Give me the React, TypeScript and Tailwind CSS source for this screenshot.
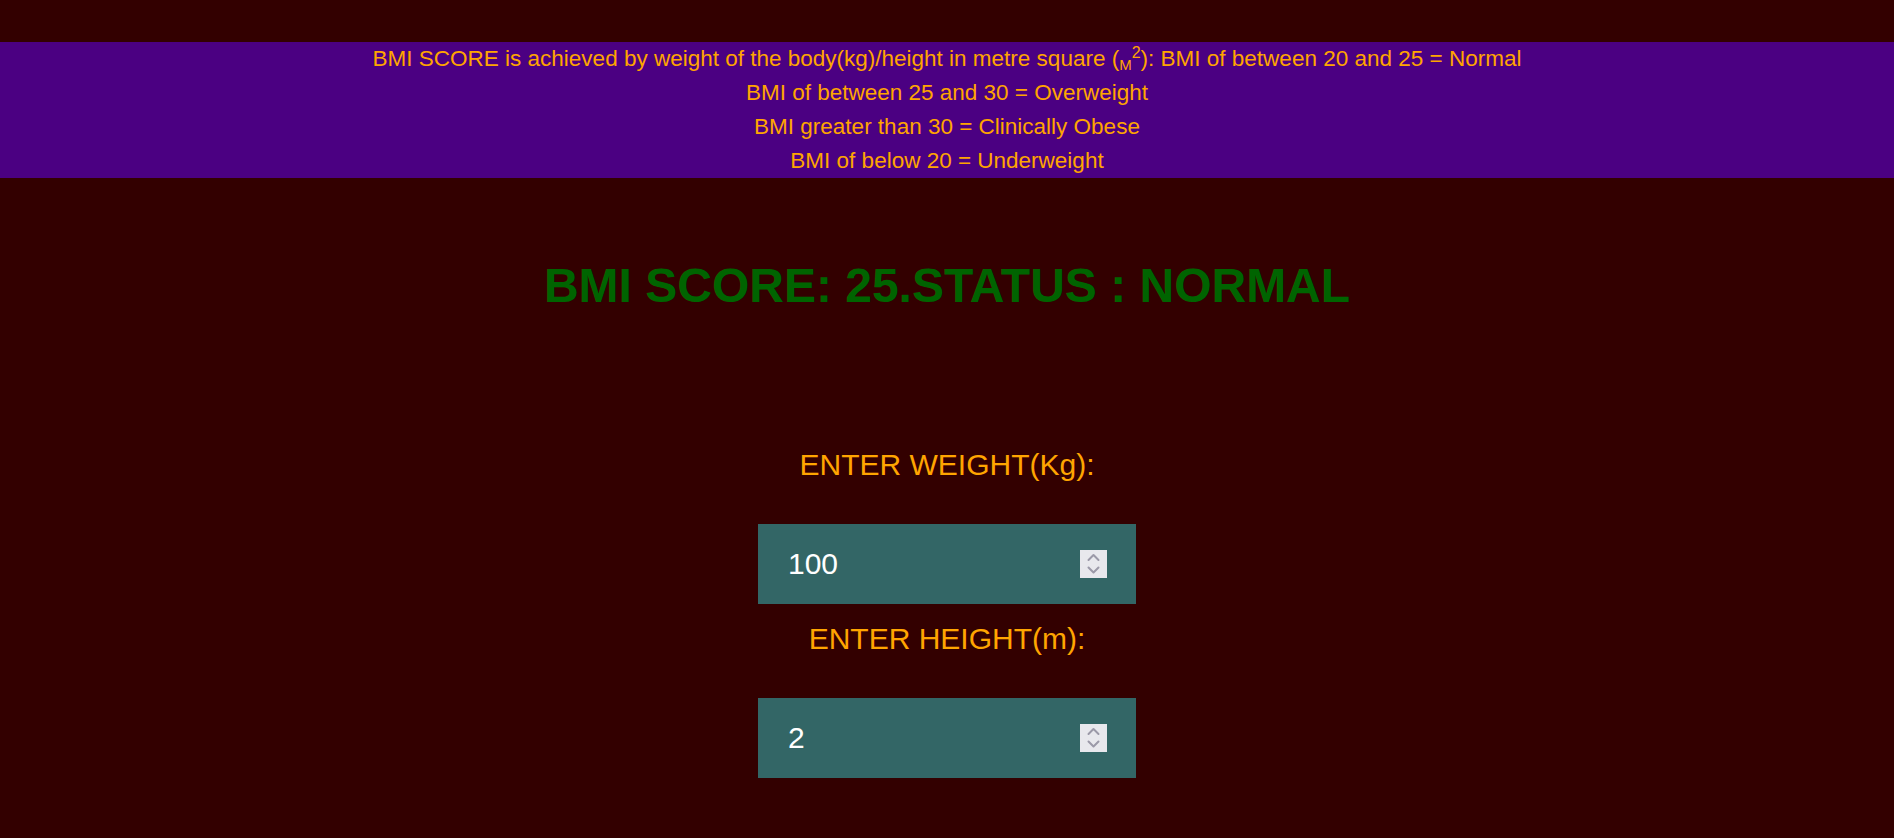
import React from "react";

function Spinner() {
  return (
    <div className="pointer-events-none absolute right-[29px] top-1/2 h-[28px] w-[27px] -translate-y-1/2 bg-[#e8e8ed]">
      <svg width="27" height="28" viewBox="0 0 27 28" fill="none" stroke="#9b99a8" strokeWidth="2" strokeLinecap="round" strokeLinejoin="round">
        <polyline points="8.5,10 13.5,5 18.5,10" />
        <polyline points="8.5,17.5 13.5,22.5 18.5,17.5" />
      </svg>
    </div>
  );
}

function NumberField({ value }: { value: string }) {
  return (
    <div className="relative h-[80px] w-[378px]">
      <input
        type="text"
        readOnly
        value={value}
        className="h-full w-full bg-[#336666] pl-[30px] text-[30px] text-white outline-none"
        style={{ fontFamily: '"Liberation Sans", Arial, sans-serif' }}
      />
      <Spinner />
    </div>
  );
}

export default function App() {
  return (
    <div
      className="min-h-screen w-full bg-[#330000] pt-[42px]"
      style={{ fontFamily: '"Liberation Sans", Arial, sans-serif' }}
    >
      <div className="bg-[#4b0082] text-center text-[22.5px] leading-[34px] text-[#ffa500]">
        <p>
          BMI SCORE is achieved by weight of the body(kg)/height in metre square (
          <sub className="text-[15px]">M</sub>
          <sup className="text-[16px]">2</sup>): BMI of between 20 and 25 = Normal
        </p>
        <p>BMI of between 25 and 30 = Overweight</p>
        <p>BMI greater than 30 = Clinically Obese</p>
        <p>BMI of below 20 = Underweight</p>
      </div>

      <h1 className="mt-[81px] text-center text-[48px] font-bold leading-[54px] text-[#006400]">
        BMI SCORE: 25.STATUS : NORMAL
      </h1>

      <div className="mt-[134px] flex flex-col items-center">
        <label className="text-[30px] leading-[36px] text-[#ffa500]">ENTER WEIGHT(Kg):</label>
        <div className="mt-[41px]">
          <NumberField value="100" />
        </div>
        <label className="mt-[17px] text-[30px] leading-[36px] text-[#ffa500]">ENTER HEIGHT(m):</label>
        <div className="mt-[41px]">
          <NumberField value="2" />
        </div>
      </div>
    </div>
  );
}
